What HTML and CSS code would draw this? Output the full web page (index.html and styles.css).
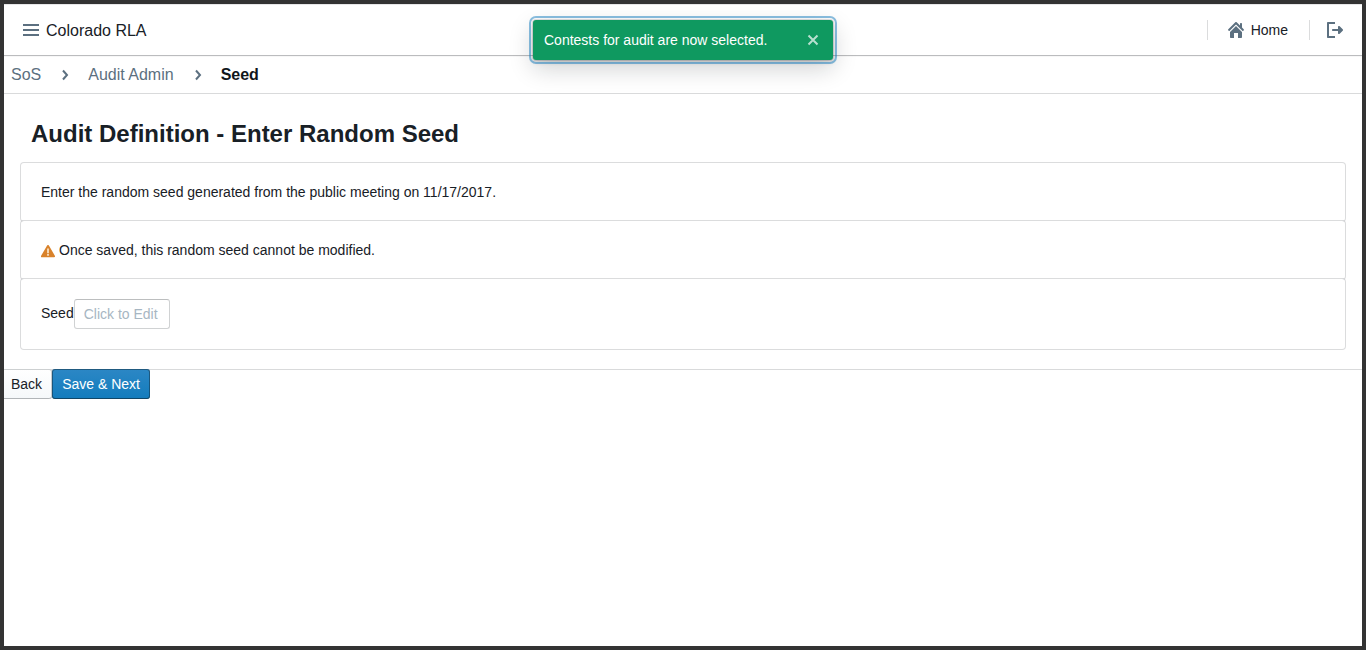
FILE: index.html
```html
<!DOCTYPE html>
<html lang="en">
<head>
<meta charset="utf-8">
<title>Colorado RLA</title>
<link rel="stylesheet" href="styles.css">
</head>
<body>
<div class="app">
  <nav class="navbar">
    <div class="navbar-group">
      <button class="menu-button" type="button" aria-label="Menu">
        <svg class="icon" width="16" height="16" viewBox="0 0 16 16"><path d="M0 2h16v2H0zM0 7h16v2H0zM0 12h16v2H0z"/></svg>
      </button>
      <span class="brand">Colorado RLA</span>
    </div>
    <div class="navbar-group">
      <span class="divider"></span>
      <a class="nav-link" href="#">
        <svg class="icon" width="16" height="16" viewBox="0 0 16 16"><path d="M8 4 2 10v5c0 .6.400 1 1 1h3v-5h4v5h3c.6 0 1-.4 1-1v-5z"/><path d="M15.700 7.300 14 5.600V2c0-.6-.4-1-1-1s-1 .4-1 1v1.600L8.700.3a1 1 0 0 0-1.400 0l-7 7a1 1 0 0 0 1.400 1.400L8 2.400l6.300 6.300a1 1 0 0 0 1.400-1.400z"/></svg>
        Home
      </a>
      <span class="divider"></span>
      <button class="logout-button" type="button" aria-label="Log out">
        <svg class="icon" width="16" height="16" viewBox="0 0 16 16"><path d="M8 14H2V2h6V0H1C.4 0 0 .4 0 1v14c0 .6.400 1 1 1h7z"/><path d="m15.700 7.300-3-3C11.800 3.500 11 4 11 5v2H6c-.6 0-1 .4-1 1s.4 1 1 1h5v2c0 1 .8 1.500 1.700.7l3-3a1 1 0 0 0 0-1.400z"/></svg>
      </button>
    </div>
  </nav>
  <ul class="breadcrumbs">
    <li><a class="crumb" href="#">SoS</a></li>
    <li><svg class="chevron" width="16" height="16" viewBox="0 0 16 16"><path d="m6 3.500 4 4.500-4 4.500"/></svg><a class="crumb" href="#">Audit Admin</a></li>
    <li><svg class="chevron" width="16" height="16" viewBox="0 0 16 16"><path d="m6 3.500 4 4.500-4 4.500"/></svg><span class="crumb crumb-current">Seed</span></li>
  </ul>
  <main class="content">
    <h2 class="title">Audit Definition - Enter Random Seed</h2>
    <div class="card">Enter the random seed generated from the public meeting on 11/17/2017.</div>
    <div class="card card-warning">
      <svg class="warning-icon" width="14" height="14" viewBox="0 0 16 16"><path class="warning-shape" d="M15.840 13.500 8.860 1.500A1 1 0 0 0 8 1a1 1 0 0 0-.86.5L.14 13.500A1 1 0 0 0 1 15h14a1 1 0 0 0 .84-1.500z"/><path class="warning-mark" d="M7 5h2v5.500H7zM7 11.500h2v2H7z"/></svg>
      <span>Once saved, this random seed cannot be modified.</span>
    </div>
    <div class="card card-seed">
      <label for="seed">Seed</label>
      <input class="seed-input" id="seed" type="text" placeholder="Click to Edit">
    </div>
  </main>
  <div class="actions">
    <button class="button button-back" type="button">Back</button>
    <button class="button button-primary" type="button">Save &amp; Next</button>
  </div>
</div>
<div class="toast" role="status">
  <span class="toast-message">Contests for audit are now selected.</span>
  <button class="toast-close" type="button" aria-label="Close">
    <svg width="16" height="16" viewBox="0 0 16 16"><path d="m3.500 3.500 9 9m0-9-9 9"/></svg>
  </button>
</div>
</body>
</html>
```
FILE: styles.css
```css
* {
  box-sizing: border-box;
}

body {
  margin: 0;
  color: #182026;
  font-family: "Liberation Sans", Arial, sans-serif;
  font-size: 14px;
  line-height: 18px;
}

button,
input {
  font: inherit;
  color: inherit;
}

button {
  border: 0;
  padding: 0;
  background: none;
  cursor: pointer;
}

a {
  color: inherit;
  text-decoration: none;
}

svg {
  display: block;
  flex: none;
}

.app {
  min-height: 100vh;
  border: 4px solid #333;
  padding-top: 1px;
  overflow: hidden;
}

.icon {
  fill: #5c7080;
}

.navbar {
  display: flex;
  justify-content: space-between;
  height: 50px;
  padding: 0 19px;
  box-shadow: 0 0 0 1px rgba(16, 22, 26, 0.1), 0 1px 1px rgba(16, 22, 26, 0.2);
}

.navbar-group {
  display: flex;
  align-items: center;
}

.brand {
  margin-left: 7px;
  font-size: 16px;
  line-height: 21px;
}

.divider {
  height: 20px;
  border-left: 1px solid rgba(16, 22, 26, 0.15);
}

.nav-link {
  display: flex;
  align-items: center;
  gap: 7px;
  padding: 0 21px 0 20px;
}

.logout-button {
  margin-left: 17px;
}

.breadcrumbs {
  display: flex;
  align-items: center;
  height: 39px;
  margin: 0;
  padding: 0 7px;
  border-bottom: 1px solid #d9dadb;
  list-style: none;
  font-size: 16px;
  line-height: 21px;
}

.breadcrumbs li {
  display: flex;
  align-items: center;
}

.chevron {
  margin: 2px 15px 0 16px;
  fill: none;
  stroke: #5c7080;
  stroke-width: 2;
}

.crumb {
  color: #5c7080;
}

.crumb-current {
  color: #10161a;
  font-weight: bold;
}

.content {
  padding: 27px 17px 20px;
}

.title {
  margin: 0 0 17px;
  padding-left: 10px;
  font-size: 24px;
  line-height: 25px;
}

.card {
  padding: 20px;
  border-radius: 3px;
  background: #fff;
  box-shadow: 0 0 0 1px rgba(16, 22, 26, 0.15);
}

.card-warning,
.card-seed {
  display: flex;
}

.card-warning {
  gap: 4px;
}

.warning-icon {
  margin-top: 3px;
}

.warning-shape {
  fill: #d9822b;
}

.warning-mark {
  fill: #f8e3c8;
}

.card-seed label {
  padding-top: 5px;
}

.seed-input {
  width: 96px;
  height: 30px;
  padding: 0 9px;
  border: 1px solid #d0d2d3;
  border-top-color: #bcbebf;
  border-radius: 3px;
  background: #fff;
}

.seed-input::placeholder {
  color: #a7b6c2;
  opacity: 1;
}

.actions {
  display: flex;
  border-top: 1px solid #d9dadb;
}

.button {
  height: 30px;
  margin-top: -1px;
  padding: 0 10px;
  border-radius: 3px;
}

.button-back {
  padding-left: 7px;
  border-radius: 0 3px 3px 0;
  background: linear-gradient(#fff, #f5f8fa);
  box-shadow: inset -1px 0 #c8cbcd, inset 0 1px #cdd0d1, inset 0 -1px #b1b5b8;
}

.button-primary {
  color: #fff;
  background: linear-gradient(#2c87c5, #137cbd);
  box-shadow: inset 0 0 0 1px rgba(16, 22, 26, 0.4), inset 0 -1px rgba(16, 22, 26, 0.2);
}

.toast {
  position: absolute;
  top: 20px;
  left: 50%;
  z-index: 1;
  display: flex;
  align-items: center;
  justify-content: space-between;
  min-width: 300px;
  height: 40px;
  padding: 0 12px 0 11px;
  border-radius: 3px;
  color: #fff;
  background: #0f9960;
  box-shadow: 0 0 0 1px rgba(16, 22, 26, 0.1), 0 2px 4px rgba(16, 22, 26, 0.2), 0 8px 24px rgba(16, 22, 26, 0.2);
  outline: 2px solid rgba(19, 124, 189, 0.5);
  outline-offset: 2px;
  transform: translateX(-50%);
  white-space: nowrap;
}

.toast-close svg {
  fill: none;
  stroke: #b7e0cf;
  stroke-width: 2;
}
```
